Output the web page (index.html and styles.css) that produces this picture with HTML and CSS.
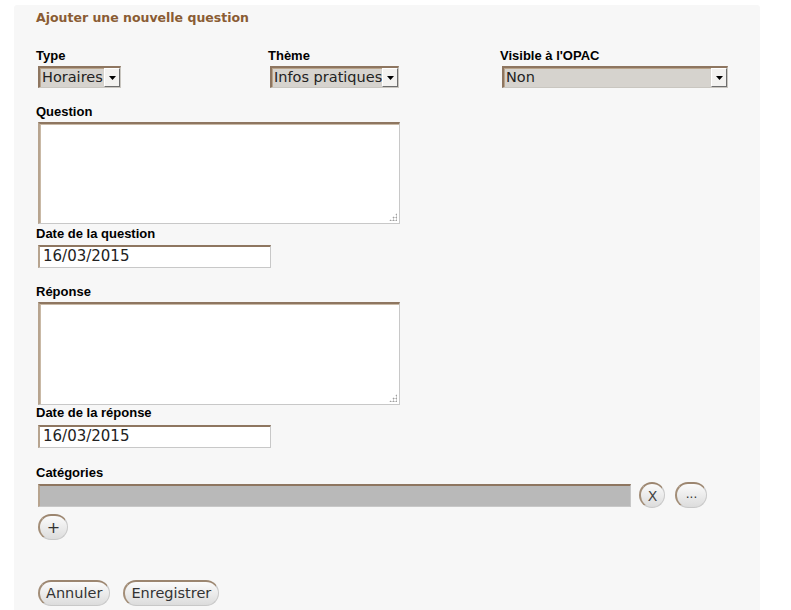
FILE: index.html
```html
<!DOCTYPE html>
<html lang="fr">
<head>
<meta charset="utf-8">
<title>Ajouter une nouvelle question</title>
<link rel="stylesheet" href="styles.css">
</head>
<body>
<div class="panel">
  <h1 class="title">Ajouter une nouvelle question</h1>

  <div class="cols">
    <div class="col">
      <label class="lbl">Type</label>
      <div class="select sel-type"><span class="sel-text">Horaires</span><span class="arrow"><svg width="7" height="4" viewBox="0 0 7 4"><path d="M0 0H7L3.5 4Z" fill="#000"/></svg></span></div>
    </div>
    <div class="col">
      <label class="lbl">Thème</label>
      <div class="select sel-theme"><span class="sel-text">Infos pratiques</span><span class="arrow"><svg width="7" height="4" viewBox="0 0 7 4"><path d="M0 0H7L3.5 4Z" fill="#000"/></svg></span></div>
    </div>
    <div class="col">
      <label class="lbl">Visible à l'OPAC</label>
      <div class="select sel-visible"><span class="sel-text">Non</span><span class="arrow"><svg width="7" height="4" viewBox="0 0 7 4"><path d="M0 0H7L3.5 4Z" fill="#000"/></svg></span></div>
    </div>
  </div>

  <label class="lbl lbl-q">Question</label>
  <div class="textarea ta-q"><span class="grip"></span></div>

  <label class="lbl lbl-dq">Date de la question</label>
  <div class="input date">16/03/2015</div>

  <label class="lbl lbl-r">Réponse</label>
  <div class="textarea ta-r"><span class="grip"></span></div>

  <label class="lbl lbl-dr">Date de la réponse</label>
  <div class="input date date-r">16/03/2015</div>

  <label class="lbl lbl-c">Catégories</label>
  <div class="cat-row">
    <div class="input cat-input"></div>
    <span class="btn btn-x">X</span>
    <span class="btn btn-dots">...</span>
  </div>
  <div class="plus-row"><span class="btn btn-plus">+</span></div>

  <div class="actions">
    <span class="btn btn-act">Annuler</span>
    <span class="btn btn-act">Enregistrer</span>
  </div>
</div>
</body>
</html>
```

FILE: styles.css
```css
html, body {
  margin: 0;
  padding: 0;
  background: #ffffff;
}

.panel {
  margin: 5px 0 0 14px;
  width: 746px;
  height: 605px;
  padding: 5px 0 0 22px;
  box-sizing: border-box;
  background: #f7f7f7;
  font-family: "DejaVu Sans", sans-serif;
  border-radius: 3px 3px 0 0;
}

.title {
  margin: 0;
  font-size: 12.5px;
  line-height: 16px;
  font-weight: bold;
  color: #8a5c34;
}

.lbl {
  display: block;
  font-family: "Liberation Sans", Arial, sans-serif;
  font-size: 13px;
  line-height: 14px;
  font-weight: bold;
  color: #000;
}

.cols {
  display: flex;
  margin-top: 23px;
}

.col {
  width: 232px;
  display: flex;
  flex-direction: column;
  align-items: flex-start;
}

.select {
  margin: 3px 0 0 2px;
  height: 22px;
  box-sizing: border-box;
  display: flex;
  align-items: stretch;
  background: #d6d3ce;
  border-style: solid;
  border-width: 2px 1px 1px 2px;
  border-color: #8e7660 #c9c6c0 #c9c6c0 #8e7660;
  box-shadow: inset 1px 1px 0 #b9a48c;
}

.sel-type { width: 83px; }
.sel-theme { width: 129px; }
.sel-visible { width: 226px; }

.sel-text {
  flex: 1;
  font-size: 14.5px;
  line-height: 18px;
  color: #222;
  padding-left: 2px;
  white-space: nowrap;
  overflow: hidden;
}

.arrow {
  width: 14px;
  background: #f3f2f0;
  border-style: solid;
  border-width: 1px;
  border-color: #ffffff #6e6e6e #6e6e6e #ffffff;
  display: flex;
  align-items: center;
  justify-content: center;
}

.lbl-q { margin-top: 17px; }

.textarea {
  position: relative;
  margin: 3px 0 0 2px;
  width: 362px;
  box-sizing: border-box;
  background: #ffffff;
  border-style: solid;
  border-width: 2px 1px 1px 2px;
  border-color: #8e7660 #c8c8c8 #c8c8c8 #b7a48f;
  box-shadow: inset 1px 1px 0 #c9b9a6;
}

.ta-q { height: 102px; }
.ta-r { height: 103px; }

.grip {
  position: absolute;
  right: 2px;
  bottom: 2px;
  width: 8px;
  height: 8px;
  background-image: radial-gradient(circle, #a0a0a0 0.8px, transparent 1.2px);
  background-size: 3px 3px;
  clip-path: polygon(100% 0, 100% 100%, 0 100%);
}

.lbl-dq { margin-top: 3px; }

.input {
  margin: 4px 0 0 2px;
  width: 233px;
  height: 23px;
  box-sizing: border-box;
  background: #ffffff;
  border-style: solid;
  border-width: 2px 1px 1px 2px;
  border-color: #8e7660 #c8c8c8 #c8c8c8 #b7a48f;
  font-size: 15px;
  line-height: 19px;
  padding-left: 3px;
  color: #222;
}

.lbl-r { margin-top: 17px; }
.lbl-dr { margin-top: 1px; }
.date-r { margin-top: 5px; }
.lbl-c { margin-top: 18px; }

.cat-row {
  display: flex;
  align-items: center;
  margin-top: 2px;
}

.cat-input {
  margin-top: 0;
  width: 593px;
  background: #b9b9b9;
}

.btn {
  display: inline-flex;
  align-items: center;
  justify-content: center;
  box-sizing: border-box;
  height: 26px;
  border-radius: 13px;
  border-style: solid;
  border-width: 2px 1px 1px 2px;
  border-color: #9c8670 #c8c8c8 #c8c8c8 #a38e78;
  background: linear-gradient(#fbfbfb, #dcdcdc);
  font-family: "DejaVu Sans", sans-serif;
  font-size: 14.5px;
  color: #333;
  line-height: 1;
}

.btn-x {
  width: 26px;
  margin-left: 8px;
  font-size: 14px;
  color: #444;
}

.btn-dots {
  width: 32px;
  margin-left: 10px;
  font-size: 12px;
  padding-bottom: 4px;
}

.plus-row {
  margin: 6px 0 0 2px;
}

.btn-plus {
  width: 30px;
  font-size: 16px;
}

.actions {
  display: flex;
  gap: 13px;
  margin: 40px 0 0 2px;
}

.btn-act {
  padding: 0 7px 0 6px;
}
```
